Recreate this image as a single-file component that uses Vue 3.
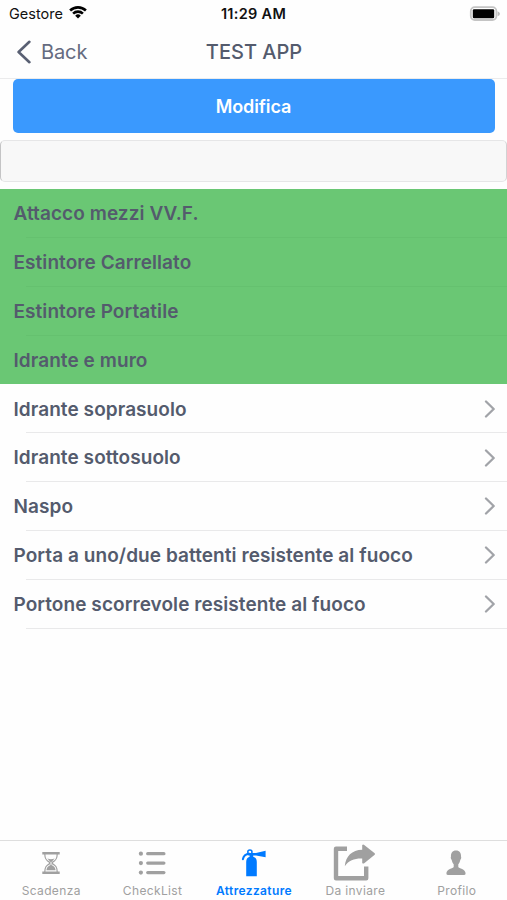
<template>
  <div class="page">
    <div class="status-bar">
      <div class="carrier">
        <span class="carrier-name">Gestore</span>
        <svg class="wifi" viewBox="0 0 18 14" width="18" height="14">
          <path d="M0.2 4.6 A12.6 12.6 0 0 1 17.8 4.6 L16 6.5 A10 10 0 0 0 2 6.5 Z" />
          <path d="M3.2 7.7 A8.3 8.3 0 0 1 14.8 7.7 L13 9.5 A5.8 5.8 0 0 0 5 9.5 Z" />
          <path d="M6.2 10.7 A4 4 0 0 1 11.8 10.7 L9 13.6 Z" />
        </svg>
      </div>
      <span class="clock">11:29 AM</span>
      <svg class="battery" viewBox="0 0 32 16" width="32" height="16">
        <rect x="1.8" y="1.2" width="25.6" height="12.8" rx="4" fill="#fff" stroke="#c4c4c4" stroke-width="1.8" />
        <rect x="3.8" y="3.2" width="21.4" height="9" rx="1.2" fill="#000" />
        <path d="M28.6 5.2 Q31 6.2 31 7.7 Q31 9.2 28.6 10.2 Z" fill="#bbb" />
      </svg>
    </div>

    <header class="nav-bar">
      <button class="back">
        <svg viewBox="0 0 16 24" width="16" height="24">
          <path d="M13.4 1.8 L2.6 12 L13.4 22.2" fill="none" stroke="#596073" stroke-width="2.6" stroke-linecap="round" stroke-linejoin="round" />
        </svg>
        <span>Back</span>
      </button>
      <h1 class="title">TEST APP</h1>
    </header>

    <main class="content">
      <button class="edit-btn">Modifica</button>
      <input class="search" type="text" />
      <ul class="list">
        <li
          v-for="item in items"
          :key="item.name"
          class="row"
          :class="{ done: item.done }"
        >
          <span class="row-name">{{ item.name }}</span>
          <svg v-if="!item.done" class="chevron" viewBox="0 0 12 18" width="12" height="18">
            <path d="M2 1.5 L9.7 9 L2 16.5" fill="none" stroke="#a1a3a8" stroke-width="2.3" stroke-linecap="round" stroke-linejoin="round" />
          </svg>
        </li>
      </ul>
    </main>

    <nav class="tab-bar">
      <a
        v-for="tab in tabs"
        :key="tab.icon"
        class="tab"
        :class="{ active: tab.icon === current }"
        @click="current = tab.icon"
      >
        <span class="tab-icon">
          <svg v-if="tab.icon === 'hourglass'" viewBox="0 0 18 22" width="18" height="22">
            <path d="M0.3 0 H17.7 V2.4 H0.3 Z M0.3 19.6 H17.7 V22 H0.3 Z" fill="currentColor" />
            <path d="M2.8 2 C2.8 7 4.2 8.6 7.4 10.1 V11.9 C4.2 13.4 2.8 15 2.8 20 M15.2 2 C15.2 7 13.8 8.6 10.6 10.1 V11.9 C13.8 13.4 15.2 15 15.2 20" fill="none" stroke="currentColor" stroke-width="1.2" />
            <path d="M5.4 6.5 Q9 8 12.6 6.5 L9.5 10 V13 Q13.3 14.6 13.6 18.3 H4.4 Q4.7 14.6 8.5 13 V10 Z" fill="currentColor" />
          </svg>
          <svg v-else-if="tab.icon === 'list'" viewBox="0 0 28 24" width="28" height="24">
            <g fill="currentColor">
              <circle cx="2.9" cy="2.7" r="2.1" />
              <circle cx="2.9" cy="12.1" r="2.1" />
              <circle cx="2.9" cy="21.6" r="2.1" />
              <rect x="8.1" y="1.1" width="19.4" height="3.2" rx="1.6" />
              <rect x="8.1" y="10.5" width="19.4" height="3.2" rx="1.6" />
              <rect x="8.1" y="20" width="19.4" height="3.2" rx="1.6" />
            </g>
          </svg>
          <svg v-else-if="tab.icon === 'extinguisher'" viewBox="0 0 26 28" width="26" height="28">
            <path d="M5.2 27.3 V13 Q5.2 8.8 8.6 7.8 V5.5 H12.2 V7.8 Q15.8 8.8 15.8 13 V27.3 Z" fill="currentColor" />
            <path d="M7.2 3.9 H15 L24.6 1.8 V8.2 L15 6.4 H7.2 Z" fill="currentColor" />
            <path d="M1.9 10.1 Q2.8 5.2 8.4 4.8" fill="none" stroke="currentColor" stroke-width="2.1" stroke-linecap="round" />
            <circle cx="8.9" cy="3" r="2.1" fill="none" stroke="currentColor" stroke-width="1.5" />
          </svg>
          <svg v-else-if="tab.icon === 'share'" viewBox="0 0 44 38" width="44" height="38">
            <path d="M14 4.8 H3 V34.2 H33.2 V22.5" fill="none" stroke="currentColor" stroke-width="4.4" stroke-linejoin="round" />
            <path d="M29.2 0.9 Q30.2 0.2 31.2 1 L41.7 9.2 Q42.3 10 41.7 10.7 L31.2 19.3 Q30.2 20 29.2 19 V14.5 C21.5 14.3 16 16 11.8 22.2 C12.6 12.2 19 5.9 29.2 5.7 Z" fill="currentColor" />
          </svg>
          <svg v-else viewBox="0 0 20 26" width="20" height="26">
            <path d="M10 0.4 C13.6 0.4 15.3 3 15 6.6 C15.5 7.4 15.2 9 14.3 10 C13.9 12 13.2 13.2 12.3 14.2 V17 C12.8 18.6 19.6 18.6 19.6 23.5 Q19.6 25 17.8 25 H2.2 Q0.4 25 0.4 23.5 C0.4 18.6 7.2 18.6 7.7 17 V14.2 C6.8 13.2 6.1 12 5.7 10 C4.8 9 4.5 7.4 5 6.6 C4.7 3 6.4 0.4 10 0.4 Z" fill="currentColor" />
          </svg>
        </span>
        <span class="tab-label">{{ tab.label }}</span>
      </a>
    </nav>
  </div>
</template>

<script setup>
import { ref } from 'vue'

const items = [
  { name: 'Attacco mezzi VV.F.', done: true },
  { name: 'Estintore Carrellato', done: true },
  { name: 'Estintore Portatile', done: true },
  { name: 'Idrante e muro', done: true },
  { name: 'Idrante soprasuolo', done: false },
  { name: 'Idrante sottosuolo', done: false },
  { name: 'Naspo', done: false },
  { name: 'Porta a uno/due battenti resistente al fuoco', done: false },
  { name: 'Portone scorrevole resistente al fuoco', done: false }
]

const tabs = [
  { icon: 'hourglass', label: 'Scadenza' },
  { icon: 'list', label: 'CheckList' },
  { icon: 'extinguisher', label: 'Attrezzature' },
  { icon: 'share', label: 'Da inviare' },
  { icon: 'person', label: 'Profilo' }
]

const current = ref('extinguisher')
</script>

<style>
body {
  margin: 0;
  background: #fff;
}
</style>

<style scoped>
.page {
  display: flex;
  flex-direction: column;
  height: 900px;
  overflow: hidden;
  background: #fefefe;
  color: #545b6d;
  font-family: Inter, "Liberation Sans", sans-serif;
}

button {
  border: none;
  padding: 0;
  font-family: inherit;
}

.status-bar {
  display: grid;
  grid-template-columns: 1fr auto 1fr;
  align-items: center;
  height: 27px;
  padding: 0 6px 0 9px;
  color: #111;
}

.carrier {
  display: flex;
  align-items: center;
  gap: 6px;
  font-size: 14.5px;
}

.wifi {
  margin-top: -3px;
}

.clock {
  margin-left: -3px;
  font-size: 14.5px;
  font-weight: 600;
  letter-spacing: 0.3px;
}

.battery {
  justify-self: end;
}

.nav-bar {
  display: grid;
  grid-template-columns: 1fr auto 1fr;
  align-items: center;
  box-sizing: border-box;
  height: 52px;
  padding: 0 16px 1px;
  border-bottom: 1px solid #ebebec;
}

.back {
  display: flex;
  align-items: center;
  gap: 9px;
  background: none;
  color: #656b80;
  font-size: 20px;
  letter-spacing: -0.1px;
}

.title {
  margin: 0;
  padding-left: 1px;
  font-size: 20px;
  font-weight: 550;
}

.content {
  flex: 1;
}

.edit-btn {
  display: block;
  width: 482px;
  height: 53.5px;
  margin: 0 auto;
  padding-top: 1px;
  border-radius: 5px;
  background: #3a99fe;
  color: #fff;
  font-size: 18px;
  font-weight: 580;
  letter-spacing: -0.1px;
}

.search {
  display: block;
  box-sizing: border-box;
  width: 100%;
  height: 42px;
  margin: 7.5px 0 7px;
  border: 1px solid #e6e6e7;
  border-left-color: #c4c4c5;
  border-right-color: #d2d2d3;
  border-radius: 5px;
  background: #f8f8f8;
}

.list {
  margin: 0;
  padding: 0;
  list-style: none;
}

.row {
  display: flex;
  align-items: center;
  justify-content: space-between;
  box-sizing: border-box;
  height: 48.85px;
  padding: 0 11px 0 13.5px;
  background: linear-gradient(#e9e9ea, #e9e9ea) 26px 100% / 100% 1px no-repeat;
}

.row.done {
  background-color: #6ac774;
  background-image: linear-gradient(#65c16f, #65c16f);
}

.row.done:nth-child(4) {
  background-image: none;
}

.row-name {
  padding-top: 0.5px;
  font-size: 19px;
  font-weight: 560;
  letter-spacing: 0.07px;
  white-space: nowrap;
}

.tab-bar {
  display: flex;
  height: 59px;
  border-top: 1px solid #dedede;
}

.tab {
  display: flex;
  flex: 1;
  flex-direction: column;
  align-items: center;
  color: #a0a0a0;
}

.tab.active {
  color: #007aff;
}

.tab-icon {
  display: flex;
  align-items: center;
  justify-content: center;
  height: 43px;
}

.tab-label {
  padding-left: 1px;
  font-size: 12px;
  line-height: 14px;
  letter-spacing: 0.36px;
}

.tab.active .tab-label {
  font-weight: 600;
}
</style>
